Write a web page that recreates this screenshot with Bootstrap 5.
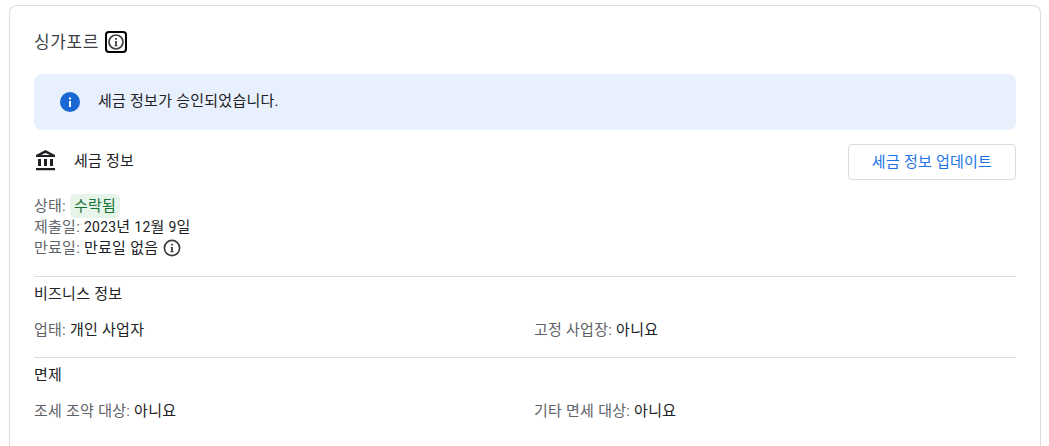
<!DOCTYPE html>
<html lang="ko">
<head>
<meta charset="utf-8">
<title>세금 정보</title>
<link href="https://cdn.jsdelivr.net/npm/bootstrap@5.3.0/dist/css/bootstrap.min.css" rel="stylesheet">
<style>
html,body{height:446px;overflow:hidden;background:#fff}
body{margin:0;font-family:Roboto,"Noto Sans CJK KR",sans-serif;font-size:15px;line-height:20px;color:#202124;letter-spacing:.25px}
.tax-card{margin:5px 8px 0 9px;border:1px solid #dadce0;border-bottom:0;border-radius:8px 8px 0 0;padding:24px 24px 0;height:441px}
.tax-title{font-size:17px;line-height:24px;color:#3c4043;letter-spacing:.6px;gap:6px}
.info-focus{width:22px;height:22px;border:2px solid #000;border-radius:4px}
.tax-alert{background:#e8f0fe;border-radius:8px;height:56px;margin-top:20px;padding:0 26px 2px;gap:18px}
.tax-alert svg{margin-top:2px}
.tax-head{margin-top:14px;height:36px}
.tax-head-label{gap:16px;height:34px}
.tax-btn{width:168px;height:36px;border:1px solid #dadce0;border-radius:4px;color:#1a73e8;background:#fff;font-size:15px;letter-spacing:.25px;padding:0;line-height:34px}
.tax-status{margin-top:15px;padding-bottom:17px;color:#5f6368;line-height:21px}
.tax-status-first{height:22px;line-height:22px}
.tax-val{color:#202124}
.tax-num{font-size:14px;letter-spacing:.2px}
.tax-chip{display:inline-block;background:#e6f4ea;color:#137333;border-radius:5px;padding:0 4px;line-height:24px;height:24px;margin:-1px 0 -1px 0}
.tax-info-icon{margin:-1px 0 0 4px}
.tax-rule{border-top:1px solid #dadce0;margin:0}
.tax-sec-title{height:34px;padding-top:7px}
.tax-row{display:grid;grid-template-columns:1fr 1fr;column-gap:18px;height:46px;padding-top:9px;color:#5f6368}
</style>
</head>
<body>
<div class="tax-card">
  <div class="tax-title d-flex align-items-center">
    <span>싱가포르</span>
    <span class="info-focus d-inline-flex align-items-center justify-content-center">
      <svg width="18" height="18" viewBox="0 0 18 18"><circle cx="9" cy="9" r="7" fill="none" stroke="#3c4043" stroke-width="1.7"/><path fill="#3c4043" d="M7.800 8h2.100v4.300h.6v1H7.500v-1h.7V9h-.4zM8.100 5h1.800v1.800H8.100z"/></svg>
    </span>
  </div>
  <div class="tax-alert d-flex align-items-center">
    <svg width="20" height="20" viewBox="0 0 20 20"><circle cx="10" cy="10" r="10" fill="#1967d2"/><rect x="9" y="9" width="2" height="6" fill="#fff"/><rect x="9" y="5.5" width="2" height="2" fill="#fff"/></svg>
    <span>세금 정보가 승인되었습니다.</span>
  </div>
  <div class="tax-head d-flex justify-content-between align-items-start">
    <div class="tax-head-label d-flex align-items-center">
      <svg width="24" height="24" viewBox="0 0 24 24"><path fill="#202124" d="M4 10v7h3v-7H4zm6 0v7h3v-7h-3zm6 0v7h3v-7h-3zM2 19h19v2.200H2zM11.500 3.900 15.900 6H7.100zm0-2.900L2 6v2h19V6z" fill-rule="evenodd"/></svg>
      <span>세금 정보</span>
    </div>
    <button type="button" class="btn tax-btn">세금 정보 업데이트</button>
  </div>
  <div class="tax-status">
    <div class="tax-status-first">상태: <span class="tax-chip">수락됨</span></div>
    <div>제출일: <span class="tax-val"><span class="tax-num">2023</span>년 <span class="tax-num">12</span>월 <span class="tax-num">9</span>일</span></div>
    <div class="d-flex align-items-center">만료일:&nbsp;<span class="tax-val">만료일 없음</span>
      <svg class="tax-info-icon" width="20" height="20" viewBox="0 0 20 20"><circle cx="10" cy="10" r="7.600" fill="none" stroke="#3c4043" stroke-width="1.700"/><path fill="#3c4043" d="M8.700 9h2.200v4.300h.7v1H8.400v-1h.7V10h-.4zM9.100 5.700h1.800v1.800H9.100z"/></svg>
    </div>
  </div>
  <div class="tax-rule"></div>
  <div class="tax-sec-title">비즈니스 정보</div>
  <div class="tax-row">
    <div>업태: <span class="tax-val">개인 사업자</span></div>
    <div>고정 사업장: <span class="tax-val">아니요</span></div>
  </div>
  <div class="tax-rule"></div>
  <div class="tax-sec-title">면제</div>
  <div class="tax-row">
    <div>조세 조약 대상: <span class="tax-val">아니요</span></div>
    <div>기타 면세 대상: <span class="tax-val">아니요</span></div>
  </div>
</div>
<script src="https://cdn.jsdelivr.net/npm/bootstrap@5.3.0/dist/js/bootstrap.bundle.min.js"></script>
</body>
</html>
